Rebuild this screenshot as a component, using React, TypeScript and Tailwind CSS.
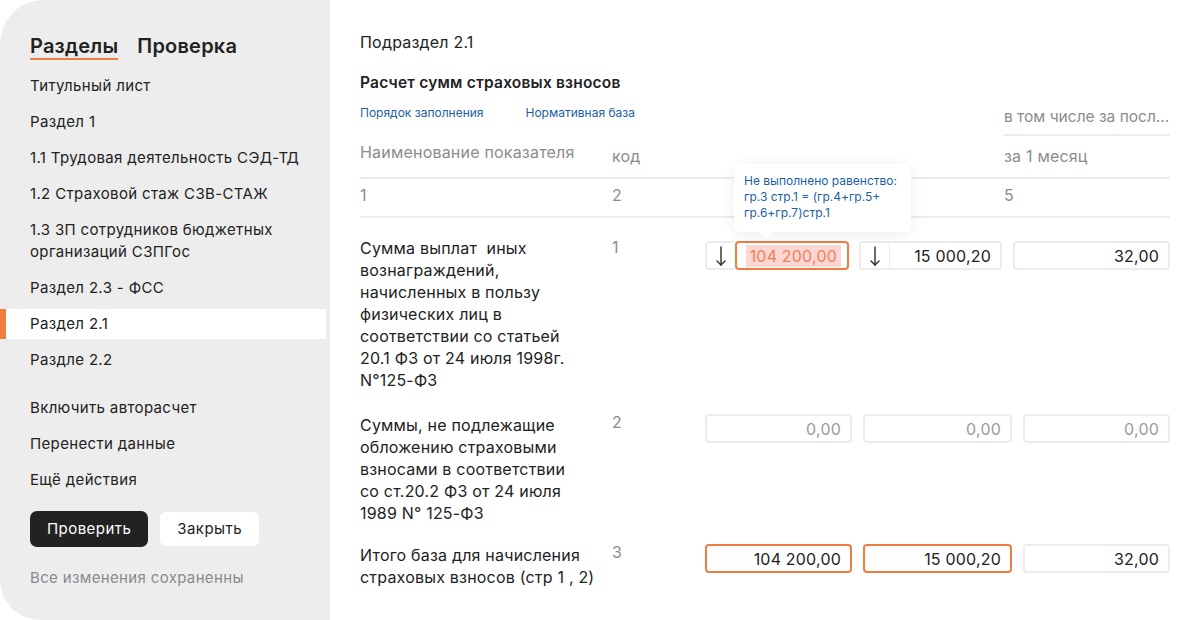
import React from "react";

const navItems: { label: React.ReactNode; active?: boolean }[] = [
  { label: "Титульный лист" },
  { label: "Раздел 1" },
  { label: "1.1 Трудовая деятельность СЭД-ТД" },
  { label: "1.2 Страховой стаж СЗВ-СТАЖ" },
  { label: (<>1.3 ЗП сотрудников бюджетных<br />организаций СЗПГос</>) },
  { label: "Раздел 2.3 - ФСС" },
  { label: "Раздел 2.1", active: true },
  { label: "Раздле 2.2" },
];

function Arrow() {
  return (
    <svg width="12" height="22" viewBox="0 0 12 22" fill="none" stroke="#2a2a2a" strokeWidth="1.4" strokeLinecap="round" strokeLinejoin="round">
      <path d="M6 2 V20" />
      <path d="M2 16 L6 20 L10 16" />
    </svg>
  );
}

function Box({ value, w, orange, muted }: { value: string; w: string; orange?: boolean; muted?: boolean }) {
  return (
    <div
      className={`${w} h-[29px] flex items-center justify-end pr-[9px] rounded-[4px] ${
        orange ? "border-2 border-[#ee7d3f]" : "border-2 border-[#ececec]"
      } ${muted ? "text-[#9a9a9a]" : "text-[#222]"}`}
    >
      {value}
    </div>
  );
}

export default function App() {
  return (
    <div
      className="w-[1200px] h-[620px] flex bg-white overflow-hidden"
      style={{ fontFamily: "Inter, 'Noto Sans', sans-serif" }}
    >
      {/* Sidebar */}
      <aside className="w-[330px] h-[620px] bg-[#ededed] rounded-tl-[44px] rounded-bl-[40px] flex flex-col pt-[31px] shrink-0 tracking-[0.35px]">
        <div className="flex gap-[19px] px-[30px] text-[20px] font-semibold text-[#222] leading-[30px] tracking-[0.2px]">
          <div className="relative">
            Разделы
            <div className="absolute left-0 right-0 top-[27px] h-[2px] bg-[#ee7d3f]" />
          </div>
          <div>Проверка</div>
        </div>
        <nav className="mt-[7px] flex flex-col text-[15px] text-[#222] leading-[22px]">
          {navItems.map((it, i) => (
            <div
              key={i}
              className={`relative my-[3px] py-[4px] px-[30px] ${it.active ? "bg-white mr-[4px]" : ""}`}
            >
              {it.active && <div className="absolute left-0 top-0 bottom-0 w-[6px] bg-[#ee7d3f]" />}
              {it.label}
            </div>
          ))}
        </nav>
        <div className="mt-[12px] flex flex-col text-[15px] text-[#222] leading-[22px]">
          <div className="py-[7px] px-[30px]">Включить авторасчет</div>
          <div className="py-[7px] px-[30px]">Перенести данные</div>
          <div className="py-[7px] px-[30px]">Ещё действия</div>
        </div>
        <div className="mt-[13px] px-[30px] flex items-center gap-[12px]">
          <button className="h-[36px] px-[17px] rounded-[7px] bg-[#222] text-white text-[15px] tracking-[0.45px]">Проверить</button>
          <button className="h-[34px] px-[17px] rounded-[6px] bg-white text-[#222] text-[15px] tracking-[0.45px]">Закрыть</button>
        </div>
        <div className="mt-[20px] px-[30px] text-[15px] text-[#8a8a8a] leading-[22px]">Все изменения сохраненны</div>
      </aside>

      {/* Main */}
      <main className="flex-1 pl-[30px] pr-[30px] pt-[31px] text-[#222] text-[16px] tracking-[0.2px]">
        <div className="leading-[22px]">Подраздел 2.1</div>
        <div className="mt-[19px] text-[15.5px] font-semibold leading-[22px]">Расчет сумм страховых взносов</div>

        <div className="flex items-end mt-[8px]">
          <div className="flex gap-[42px] text-[12px] tracking-[0px] text-[#1c5fa3] leading-[16px] pb-[15px] flex-1">
            <span>Порядок заполнения</span>
            <span>Нормативная база</span>
          </div>
          <div className="w-[166px] border-b-2 border-[#ececec] text-[#8c8c8c] text-[15.5px] tracking-[0px] leading-[22px] pb-[6px] pt-[4px] whitespace-nowrap">
            в том числе за посл...
          </div>
        </div>

        <div className="flex border-b-2 border-[#ececec] text-[#8c8c8c] leading-[22px] h-[43px]">
          <div className="w-[252px] pt-[5px]">Наименование показателя</div>
          <div className="w-[392px] pt-[9px]">код</div>
          <div className="flex-1 pt-[9px]">за 1 месяц</div>
        </div>
        <div className="flex border-b-2 border-[#ececec] text-[#8c8c8c] leading-[22px] h-[39px] pt-[5px]">
          <div className="w-[252px]">1</div>
          <div className="w-[392px]">2</div>
          <div className="flex-1">5</div>
        </div>

        {/* Row 1 */}
        <div className="flex mt-[19px] leading-[22px]">
          <div className="w-[252px] whitespace-nowrap">
            Сумма выплат&nbsp; иных<br />
            вознаграждений,<br />
            начисленных в пользу<br />
            физических лиц в<br />
            соответствии со статьей<br />
            20.1 ФЗ от 24 июля 1998г.<br />
            N°125-ФЗ
          </div>
          <div className="w-[93px] text-[#8c8c8c] -mt-[1px]">1</div>
          <div className="flex mt-[4px] h-[29px]">
            <div className="relative flex">
              <div className="w-[30px] h-[29px] border-2 border-r-0 border-[#ececec] rounded-l-[4px] flex items-center justify-center">
                <Arrow />
              </div>
              <div className="w-[114px] h-[29px] border-2 border-[#ee7d3f] rounded-[4px] flex items-center justify-end pr-[6px]">
                <span className="bg-[#fbd6d3] text-[#f0805c] px-[4px] leading-[22px]">104 200,00</span>
              </div>
              {/* tooltip */}
              <div className="absolute left-[29px] bottom-[38px] w-[177px] bg-white rounded-[6px] shadow-[0_2px_14px_rgba(0,0,0,0.08)] px-[10px] pt-[9px] pb-[11px] text-[12px] tracking-[0px] leading-[16px] text-[#1c5fa3] z-10">
                Не выполнено равенство:
                <br />
                гр.3 стр.1 = (гр.4+гр.5+
                <br />
                гр.6+гр.7)стр.1
                <div className="absolute left-[27px] -bottom-[5px] w-[11px] h-[11px] bg-white rotate-45" />
              </div>
            </div>
            <div className="flex ml-[10px]">
              <div className="w-[31px] h-[29px] border-2 border-r border-[#ececec] rounded-l-[4px] flex items-center justify-center">
                <Arrow />
              </div>
              <div className="w-[112px] h-[29px] border-2 border-l-0 border-[#ececec] rounded-r-[4px] flex items-center justify-end pr-[9px]">
                15 000,20
              </div>
            </div>
            <div className="ml-[11px]">
              <Box value="32,00" w="w-[157px]" />
            </div>
          </div>
        </div>

        {/* Row 2 */}
        <div className="flex mt-[23px] leading-[22px]">
          <div className="w-[252px] whitespace-nowrap">
            Суммы, не подлежащие<br />
            обложению страховыми<br />
            взносами в соответствии<br />
            со ст.20.2 ФЗ от 24 июля<br />
            1989 N° 125-ФЗ
          </div>
          <div className="w-[93px] text-[#8c8c8c] -mt-[3px]">2</div>
          <div className="flex gap-[11px] h-[29px]">
            <Box value="0,00" w="w-[147px]" muted />
            <Box value="0,00" w="w-[149px]" muted />
            <Box value="0,00" w="w-[147px]" muted />
          </div>
        </div>

        {/* Row 3 */}
        <div className="flex mt-[20px] leading-[22px]">
          <div className="w-[252px] whitespace-nowrap">
            Итого база для начисления<br />
            страховых взносов (стр 1 , 2)
          </div>
          <div className="w-[93px] text-[#8c8c8c] -mt-[3px]">3</div>
          <div className="flex gap-[11px] h-[29px]">
            <Box value="104 200,00" w="w-[147px]" orange />
            <Box value="15 000,20" w="w-[149px]" orange />
            <Box value="32,00" w="w-[147px]" />
          </div>
        </div>
      </main>
    </div>
  );
}
